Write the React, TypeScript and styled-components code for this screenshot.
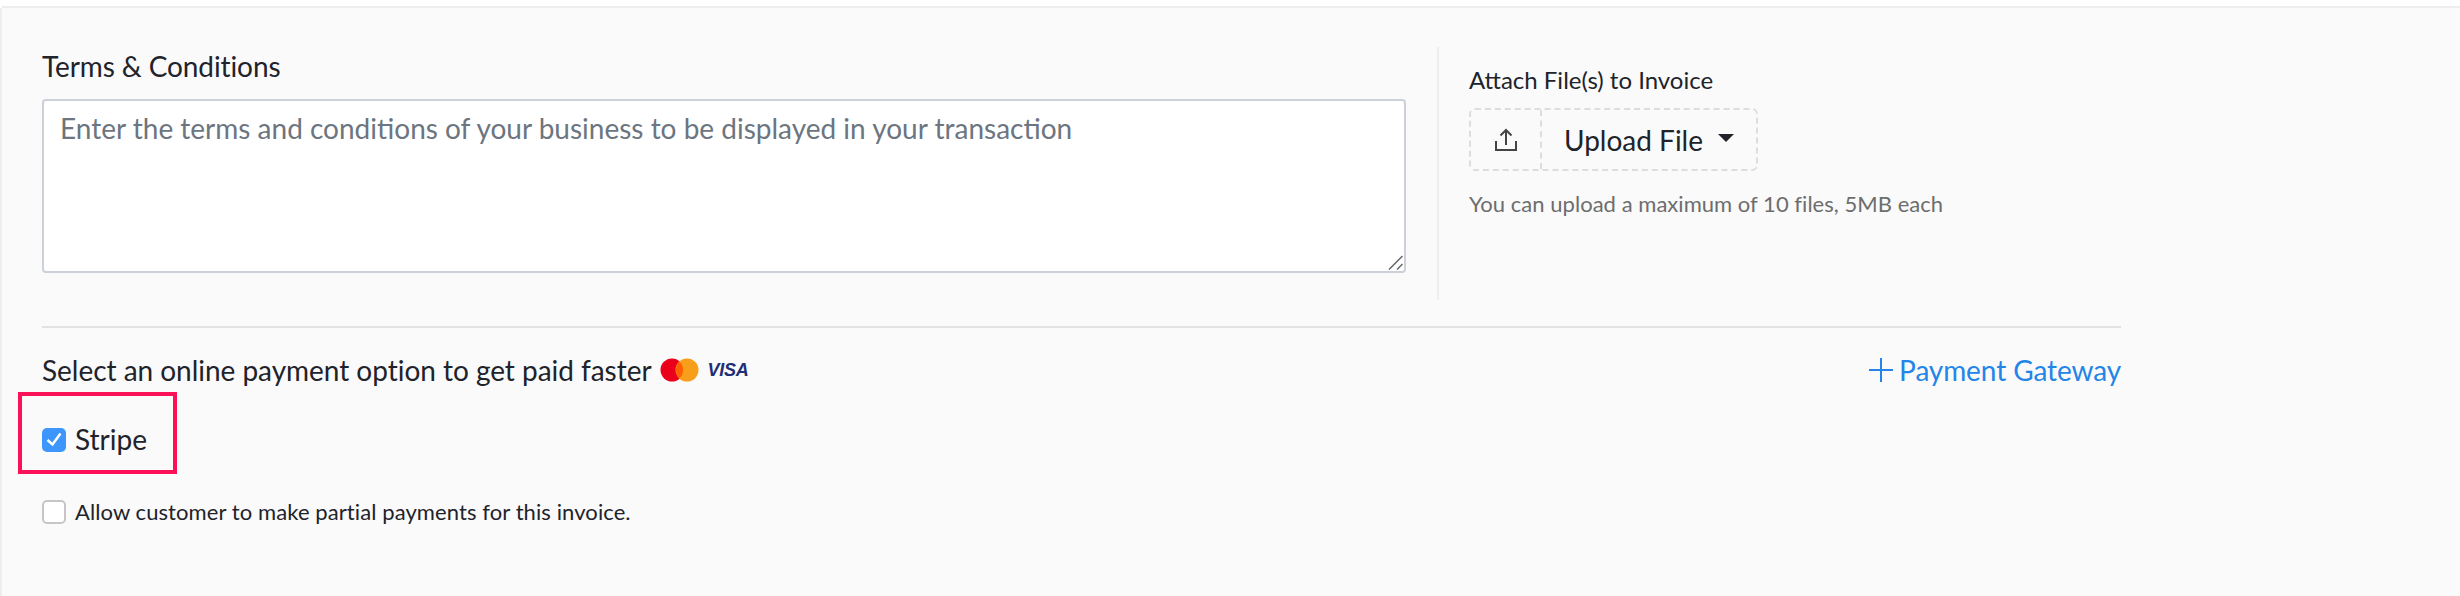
import { createGlobalStyle } from 'styled-components'
import styled from 'styled-components'

const GlobalStyle = createGlobalStyle`
  html, body {
    margin: 0;
    height: 596px;
    overflow: hidden;
    background: #fff;
    font-family: Lato, "Liberation Sans", sans-serif;
    color: #21232b;
  }
  * { box-sizing: border-box; }
`

const TopStrip = styled.div`
  height: 8px;
  border-bottom: 2px solid #eeeeee;
  margin-left: 2px;
`

const Panel = styled.div`
  height: 588px;
  border-left: 2px solid #eeeeee;
  background: #fafafa;
  padding: 39px 0 0 40px;
  width: 100%;
`

const Content = styled.div`
  width: 2079px;
`

const TopSection = styled.section`
  display: flex;
  height: 253px;
`

const TermsColumn = styled.div`
  width: 1364px;
`

const TermsLabel = styled.label`
  display: block;
  font-size: 28px;
  letter-spacing: -0.1px;
  line-height: 38px;
  margin-bottom: 14px;
`

const TermsField = styled.div`
  position: relative;
  height: 174px;
`

const TermsInput = styled.textarea`
  display: block;
  width: 100%;
  height: 100%;
  border: 2px solid #ccd1d7;
  border-radius: 4px;
  background: #fff;
  padding: 9px 16px;
  font-family: inherit;
  font-size: 28px;
  line-height: 36px;
  resize: none;
  outline: none;

  &::placeholder {
    color: #6c7580;
    opacity: 1;
  }
`

const ResizeGrip = styled.svg`
  position: absolute;
  right: 3px;
  bottom: 3px;
`

const AttachColumn = styled.div`
  margin-left: 31px;
  border-left: 2px solid #eeeeee;
  padding: 17px 0 0 30px;
`

const AttachLabel = styled.div`
  font-size: 24px;
  line-height: 32px;
  margin-bottom: 12px;
`

const UploadBox = styled.div`
  display: flex;
  width: 289px;
  height: 63px;
  border: 2px dashed #dddddd;
  border-radius: 6px;
`

const UploadIcon = styled.div`
  width: 71px;
  display: flex;
  align-items: center;
  justify-content: center;
  border-right: 2px dashed #dddddd;
`

const UploadButton = styled.div`
  display: flex;
  align-items: center;
  padding-left: 22px;
  font-size: 28px;
`

const Caret = styled.span`
  width: 0;
  height: 0;
  margin: 0 0 4px 15px;
  border-left: 8px solid transparent;
  border-right: 8px solid transparent;
  border-top: 8px solid #21232b;
`

const HelpText = styled.div`
  margin-top: 18px;
  font-size: 22px;
  letter-spacing: 0.03px;
  line-height: 30px;
  color: #6d6d6d;
`

const Rule = styled.hr`
  margin: 26px 0 0;
  border: 0;
  border-top: 2px solid #e2e2e2;
`

const PaymentRow = styled.div`
  display: flex;
  align-items: center;
  justify-content: space-between;
  height: 40px;
  margin-top: 22px;
`

const PaymentTitle = styled.div`
  display: flex;
  align-items: center;
  font-size: 28px;
  letter-spacing: -0.03px;
`

const CardLogos = styled.span`
  display: flex;
  align-items: center;
  margin-left: 8px;
`

const VisaMark = styled.span`
  margin-left: 9px;
  font-family: "Liberation Sans", sans-serif;
  font-size: 18px;
  font-style: italic;
  font-weight: 700;
  letter-spacing: -0.3px;
  color: #1f2f73;
`

const GatewayLink = styled.a`
  display: flex;
  align-items: center;
  gap: 6px;
  font-size: 28px;
  letter-spacing: -0.1px;
  color: #2485e8;
`

const OptionRow = styled.label<{ $gap: number; $size: number; $spacing?: number }>`
  position: relative;
  display: flex;
  align-items: center;
  gap: 9px;
  height: 24px;
  margin-top: ${({ $gap }) => $gap}px;
  font-size: ${({ $size }) => $size}px;
  letter-spacing: ${({ $spacing }) => $spacing ?? 0}px;
`

const OptionText = styled.span`
  margin-top: -2px;
`

const Checkbox = styled.span<{ $checked?: boolean }>`
  width: 24px;
  height: 24px;
  display: flex;
  align-items: center;
  justify-content: center;
  border-radius: 5px;
  background: ${({ $checked }) => ($checked ? '#3d96fc' : '#fff')};
  border: ${({ $checked }) => ($checked ? '0' : '2px solid #c6c6c6')};
`

const Highlight = styled.span`
  position: absolute;
  left: -24px;
  top: -36px;
  width: 159px;
  height: 82px;
  border: 4px solid #fa1158;
`

export default function App() {
  return (
    <>
      <GlobalStyle />
      <TopStrip />
      <Panel>
        <Content>
          <TopSection>
            <TermsColumn>
              <TermsLabel>Terms &amp; Conditions</TermsLabel>
              <TermsField>
                <TermsInput placeholder="Enter the terms and conditions of your business to be displayed in your transaction" />
                <ResizeGrip width="15" height="15" viewBox="0 0 15 15" fill="none" stroke="#666" strokeWidth="1.500">
                  <path d="M1 14.500 14.500 1M9 14.500l5.500-5.500" />
                </ResizeGrip>
              </TermsField>
            </TermsColumn>
            <AttachColumn>
              <AttachLabel>Attach File(s) to Invoice</AttachLabel>
              <UploadBox>
                <UploadIcon>
                  <svg width="24" height="24" viewBox="0 0 24 24" fill="none" stroke="#444" strokeWidth="2">
                    <path d="M2 13v9h20v-9" />
                    <path d="M12 17V2M6.500 7.500 12 2l5.500 5.500" />
                  </svg>
                </UploadIcon>
                <UploadButton>
                  Upload File
                  <Caret />
                </UploadButton>
              </UploadBox>
              <HelpText>You can upload a maximum of 10 files, 5MB each</HelpText>
            </AttachColumn>
          </TopSection>
          <Rule />
          <PaymentRow>
            <PaymentTitle>
              Select an online payment option to get paid faster
              <CardLogos>
                <svg width="39" height="24" viewBox="0 0 39 24">
                  <circle cx="12" cy="12" r="11.500" fill="#eb001b" />
                  <circle cx="27" cy="12" r="11.500" fill="#f79e1b" />
                  <path d="M19.500 3.700a11.500 11.500 0 0 1 0 16.600a11.500 11.500 0 0 1 0-16.600z" fill="#ff5f00" />
                </svg>
                <VisaMark>VISA</VisaMark>
              </CardLogos>
            </PaymentTitle>
            <GatewayLink>
              <svg width="24" height="24" viewBox="0 0 24 24" fill="none" stroke="#2485e8" strokeWidth="2">
                <path d="M12 0v24M0 12h24" />
              </svg>
              Payment Gateway
            </GatewayLink>
          </PaymentRow>
          <OptionRow $gap={38} $size={28}>
            <Highlight />
            <Checkbox $checked>
              <svg width="24" height="24" viewBox="0 0 24 24" fill="none" stroke="#fff" strokeWidth="2.500">
                <path d="M5.500 12 10.500 16.500 18.500 5.500" />
              </svg>
            </Checkbox>
            <OptionText>Stripe</OptionText>
          </OptionRow>
          <OptionRow $gap={48} $size={22} $spacing={0.09}>
            <Checkbox />
            <OptionText>Allow customer to make partial payments for this invoice.</OptionText>
          </OptionRow>
        </Content>
      </Panel>
    </>
  )
}
